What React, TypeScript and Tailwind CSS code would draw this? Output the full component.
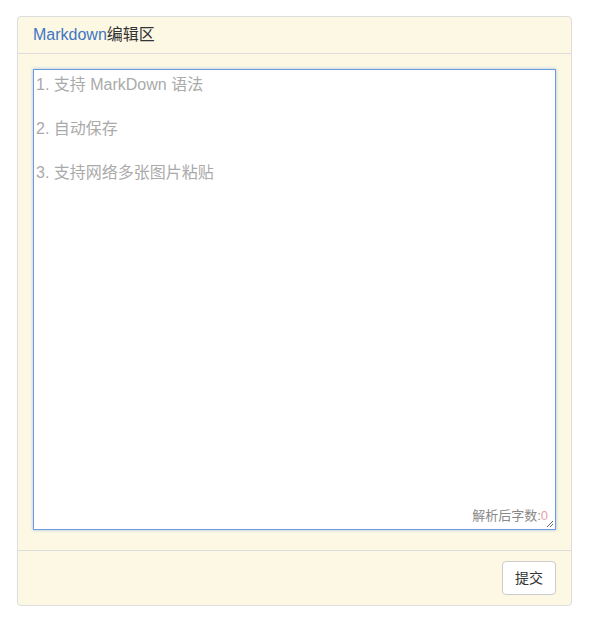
import { useState } from "react";

const placeholder = "1. 支持 MarkDown 语法\n\n2. 自动保存\n\n3. 支持网络多张图片粘贴";

const App = () => {
  const [text, setText] = useState("");

  return (
    <div className="min-h-screen bg-white pt-4 px-[17px] font-['Liberation_Sans','Noto_Sans_CJK_SC',sans-serif]">
      <div className="w-[555px] rounded border border-[#ddd] bg-[#fcf8e3]">
        {/* heading */}
        <div className="h-[37px] flex items-center px-[15px] border-b border-[#ddd] text-[16px] text-[#333]">
          <span className="text-[#3f76c4]">Markdown</span>编辑区
        </div>

        {/* body */}
        <div className="px-[15px] pt-[15px] pb-[20px]">
          <div className="relative h-[461px] bg-white border border-[color:#6c9be0] shadow-[0_0_3px_rgba(102,155,233,0.6)]">
            <textarea
              value={text}
              onChange={(e) => setText(e.target.value)}
              placeholder={placeholder}
              className="block w-full h-full resize-none bg-transparent outline-none pl-[2px] pr-[3px] pt-[4px] text-[16px] leading-[22px] text-[#333] placeholder:text-[#aaa]"
            />
            <div className="absolute right-[7px] bottom-[5px] text-[13px] leading-4 text-[#888]">
              解析后字数:<span className="text-[#e8a0a0]">{text.length}</span>
            </div>
            <svg className="absolute right-[1px] bottom-[1px]" width="9" height="9" viewBox="0 0 9 9">
              <path d="M8 2 L2 8 M8 5 L5 8" stroke="#666" strokeWidth="1" />
            </svg>
          </div>
        </div>

        {/* footer */}
        <div className="h-[55px] flex items-center justify-end px-[15px] border-t border-[#ddd]">
          <button className="h-[34px] px-3 rounded border border-[#ccc] bg-white text-[14px] text-[#333]">
            提交
          </button>
        </div>
      </div>
    </div>
  );
};

export default App;
